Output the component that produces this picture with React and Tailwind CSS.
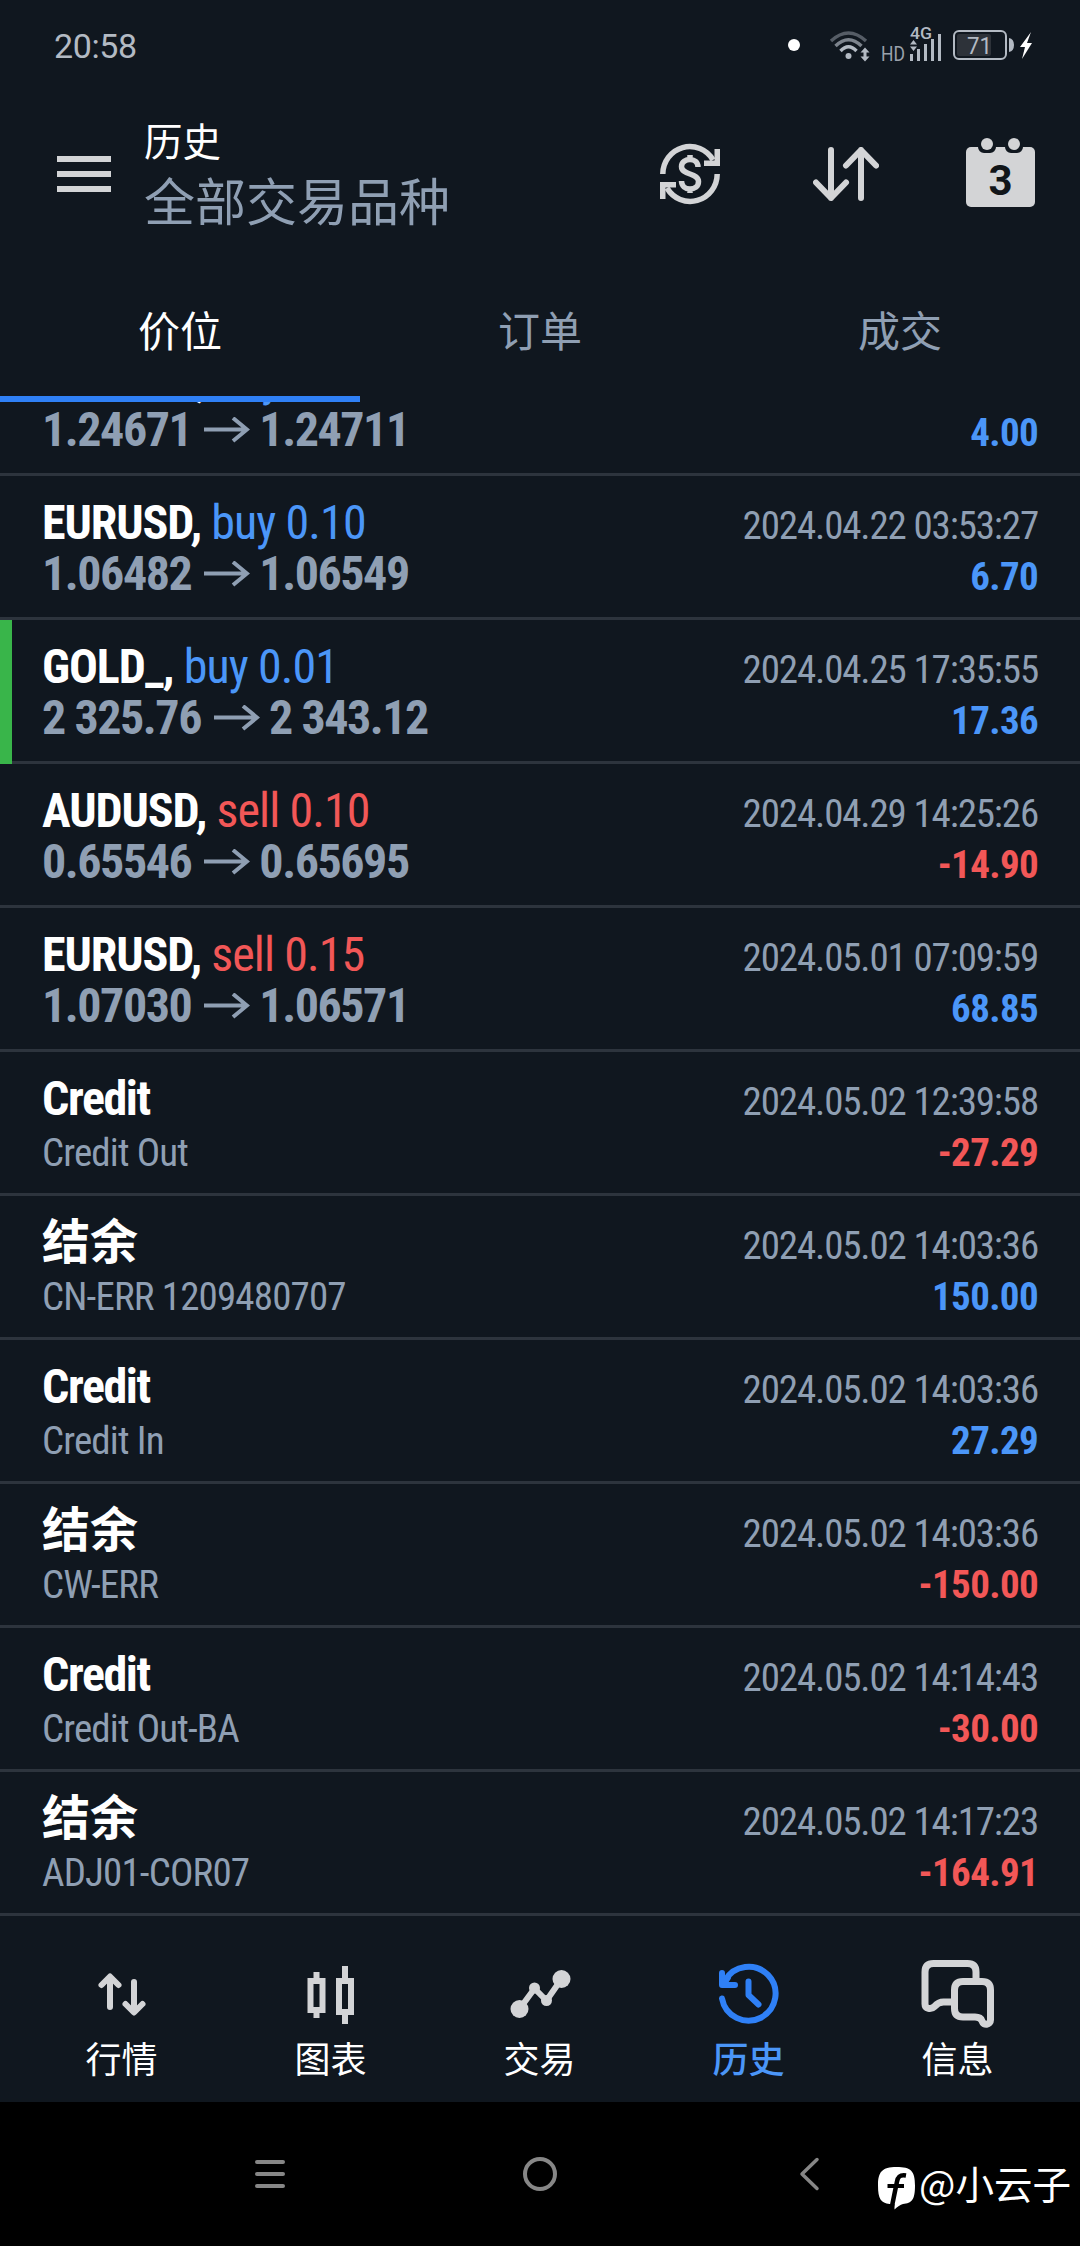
import React from 'react';

const rows = [
  { title: 'GBPUSD', side: 'buy', lot: '0.10', from: '1.24671', to: '1.24711', date: '2024.04.22 03:51:10', value: '4.00' },
  { title: 'EURUSD', side: 'buy', lot: '0.10', from: '1.06482', to: '1.06549', date: '2024.04.22 03:53:27', value: '6.70' },
  { title: 'GOLD_', side: 'buy', lot: '0.01', from: '2 325.76', to: '2 343.12', date: '2024.04.25 17:35:55', value: '17.36', marked: true },
  { title: 'AUDUSD', side: 'sell', lot: '0.10', from: '0.65546', to: '0.65695', date: '2024.04.29 14:25:26', value: '-14.90' },
  { title: 'EURUSD', side: 'sell', lot: '0.15', from: '1.07030', to: '1.06571', date: '2024.05.01 07:09:59', value: '68.85' },
  { title: 'Credit', comment: 'Credit Out', date: '2024.05.02 12:39:58', value: '-27.29' },
  { title: '结余', comment: 'CN-ERR 1209480707', date: '2024.05.02 14:03:36', value: '150.00' },
  { title: 'Credit', comment: 'Credit In', date: '2024.05.02 14:03:36', value: '27.29' },
  { title: '结余', comment: 'CW-ERR', date: '2024.05.02 14:03:36', value: '-150.00' },
  { title: 'Credit', comment: 'Credit Out-BA', date: '2024.05.02 14:14:43', value: '-30.00' },
  { title: '结余', comment: 'ADJ01-COR07', date: '2024.05.02 14:17:23', value: '-164.91' },
];

const StatusBar = () => (
  <div className="h-[92px] pl-[54px] pr-[46px] flex items-center justify-between text-[#b3bac3]">
    <span className="text-[34px] leading-[40px] tracking-[-0.4px]">20:58</span>
    <svg width="248" height="44" viewBox="786 24 248 44" fill="none">
      <circle cx="794" cy="45" r="6" fill="#fff" />
      <g strokeWidth="3.4">
        <path d="M831 41 Q848.500 25 866 41" stroke="#565d66" />
        <path d="M835.500 46 Q848.500 33.500 861.500 46" stroke="#7d848d" />
        <path d="M840.500 51 Q848.500 42.500 856.500 51" stroke="#b3bac3" />
      </g>
      <circle cx="848.500" cy="56" r="3" fill="#b3bac3" />
      <path d="M865 47.500 l4.500 5 h-3 v4 h3 l-4.500 5 l-4.500 -5 h3 v-4 h-3z" fill="#b3bac3" />
      <text x="881" y="61" fontSize="21" textLength="24" lengthAdjust="spacingAndGlyphs" fill="#9aa1ab">HD</text>
      <text x="910" y="39" fontSize="16.500" fontWeight="500" textLength="22" lengthAdjust="spacingAndGlyphs" fill="#b3bac3">4G</text>
      <path d="M911.500 61v-7M918.500 61v-12M925.500 61v-17M932.500 61v-22M939.500 61v-27" stroke="#b3bac3" strokeWidth="3" />
      <path d="M913.500 40l3.500 4.500h-7zM913.500 51l3.500-4.500h-7z" fill="#b3bac3" />
      <rect x="954" y="31" width="52" height="28" rx="5" stroke="#b3bac3" strokeWidth="2" />
      <rect x="957" y="34" width="34" height="22" rx="2" fill="#2d3239" />
      <text x="967" y="54" fontSize="24" textLength="25" lengthAdjust="spacingAndGlyphs" fill="#b3bac3">71</text>
      <path d="M1009 38 q5 1 5 7 t-5 7z" fill="#b3bac3" />
      <path d="M1031 32 L1020 47 h5 l-3 12 L1032 43 h-5z" fill="#fff" />
    </svg>
  </div>
);

const RefreshDollar = () => (
  <svg width="60" height="62" viewBox="0 0 60 62" fill="none" stroke="#d3d4d6" strokeWidth="5.500">
    <path d="M2.800 31 A27 27.500 0 0 1 53 17" />
    <path d="M57.200 31 A27 27.500 0 0 1 7 45" />
    <path d="M60 6v17H44v-5.500l10.500 0V6zM0 56V39H16v5.500H5.500V56z" fill="#d3d4d6" stroke="none" />
    <path d="M38 24c0-5-4-7.500-8-7.500s-8.500 2.500-8.500 7c0 9 17 6 17 15c0 5-4 7.500-8.500 7.500s-8.500-3-8.500-8M30 12v5M30 45v5" />
  </svg>
);

const SortArrows = () => (
  <svg width="66" height="54" viewBox="0 0 66 54" fill="none" stroke="#d3d4d6" strokeWidth="6" strokeLinecap="round" strokeLinejoin="round">
    <path d="M18 3v48M3 35.500l15 15.500l15-15.500" />
    <path d="M48 51V3M33 18.500L48 3l15 15.500" />
  </svg>
);

const Calendar = () => (
  <svg width="69" height="70" viewBox="0 0 69 70">
    <rect y="9" width="69" height="60" rx="5" fill="#d3d4d6" />
    <path d="M12 8v1a6 6 0 0 0 6 6h6a6 6 0 0 0 6-6v-1zM39 8v1a6 6 0 0 0 6 6h6a6 6 0 0 0 6-6v-1z" fill="#10171f" />
    <circle cx="21" cy="6" r="6" fill="#d3d4d6" />
    <circle cx="48" cy="6" r="6" fill="#d3d4d6" />
    <text x="34.500" y="57" fontSize="42" fontWeight="700" textAnchor="middle" fill="#111519">3</text>
  </svg>
);

const Header = () => (
  <header className="h-[172px] pl-[57px] pr-[45px] flex items-start">
    <div className="mt-[64px] w-[54px] flex flex-col gap-[9px]">
      <div className="h-[6px] bg-[#d3d4d6]" />
      <div className="h-[6px] bg-[#d3d4d6]" />
      <div className="h-[6px] bg-[#d3d4d6]" />
    </div>
    <div className="ml-[33px] mt-[25px] flex-1">
      <div className="text-[38.500px] leading-[52px] text-white">历史</div>
      <div className="mt-[2px] text-[51px] leading-[66px] text-[#8f9fb3]">全部交易品种</div>
    </div>
    <div className="mt-[46px] flex items-start">
      <div className="mt-[5px] mr-[93px]"><RefreshDollar /></div>
      <div className="mt-[9px] mr-[87px]"><SortArrows /></div>
      <Calendar />
    </div>
  </header>
);

const Tabs = () => (
  <div className="h-[138px] grid grid-cols-3 text-[42px] leading-[60px] text-center text-[#8f9fb3]">
    <div className="pt-[39px] text-white border-b-[6px] border-[#2f80f6]">价位</div>
    <div className="pt-[39px]">订单</div>
    <div className="pt-[39px]">成交</div>
  </div>
);

const PriceArrow = () => (
  <svg className="inline-block align-baseline ml-[13px] mr-[9px]" width="46" height="29" viewBox="0 0 46 29" fill="none" stroke="#8f9fb3" strokeWidth="4">
    <path d="M0 12.500h43M29 1l14 11.500l-14 11.500" />
  </svg>
);

const Row = ({ row }) => {
  const sideColor = row.side === 'buy' ? 'text-[#4b96f8]' : 'text-[#f25757]';
  const valueColor = row.value.startsWith('-') ? 'text-[#f25757]' : 'text-[#4b96f8]';
  // latin titles are set tighter than the Chinese ones
  let titleTracking = 'tracking-[-1.1px]';
  if (row.title === '结余') titleTracking = 'tracking-normal';
  if (row.title === 'Credit') titleTracking = 'tracking-[-1.45px]';

  return (
    <div className="h-[144px] shrink-0 flex border-b-[3px] border-[#2d343d]">
      <div className={row.marked ? 'w-[12px] -mb-[3px] bg-[#39b54a]' : 'w-[12px]'} />
      <div className="flex-1 pt-[21px] pl-[30px] pr-[42px] font-['Roboto_Condensed','Roboto','Noto_Sans_CJK_SC',sans-serif] [font-stretch:75%]">
        <div className="h-[51px] flex items-baseline justify-between leading-[51px] whitespace-pre">
          <div className="text-[48px]">
            <span className={`font-bold text-white ${titleTracking}`}>{row.title}{row.side && ','}</span>
            {row.side && <span className={`tracking-[-0.9px] ${sideColor}`}> {row.side} {row.lot}</span>}
          </div>
          <div className="text-[39px] tracking-[-1.15px] text-[#8f9fb3]">{row.date}</div>
        </div>
        <div className="h-[51px] flex items-baseline justify-between whitespace-pre text-[#8f9fb3]">
          {row.side ? (
            <div className="text-[48px] leading-[51px] tracking-[-1.45px] font-bold">{row.from}<PriceArrow />{row.to}</div>
          ) : (
            <div className="text-[39px] leading-[59px] tracking-[-0.85px]">{row.comment}</div>
          )}
          <div className={`text-[39px] leading-[51px] tracking-[-0.65px] font-bold ${valueColor}`}>{row.value}</div>
        </div>
      </div>
    </div>
  );
};

const icons = {
  quotes: (
    <g fill="none" stroke="#d3d4d6" strokeWidth="6" strokeLinecap="round" strokeLinejoin="round">
      <path d="M28 47V17M19.500 25l8.500-8.500l8.500 8.500M52 22v30M43.500 44l8.500 8.500l8.500-8.500" />
    </g>
  ),
  charts: (
    <g fill="none" stroke="#d3d4d6" strokeWidth="6">
      <path d="M19.500 21h12v29H19.500zM48 21h12v31H48zM25.500 12v6M25.500 53v5M54 6v12M54 55v9" />
    </g>
  ),
  trade: (
    <g fill="#d3d4d6" stroke="#d3d4d6" strokeWidth="6">
      <path d="M19.500 49L34.500 28.500L46.500 40.500L61.500 19" fill="none" />
      <circle cx="19.500" cy="49" r="9" stroke="none" />
      <circle cx="34.500" cy="28" r="5.500" stroke="none" />
      <circle cx="46.500" cy="40.500" r="5.500" stroke="none" />
      <circle cx="61.500" cy="19" r="9" stroke="none" />
    </g>
  ),
  history: (
    <g fill="none" stroke="#2f80f6" strokeWidth="6" strokeLinecap="round" strokeLinejoin="round">
      <path d="M13 38.500A27 27 0 1 0 16 20.500M13 13v12h13M15 23.500l4-6M39.500 21.500v13.500l10 9.500" />
    </g>
  ),
  messages: (
    <g fill="none" stroke="#d3d4d6" strokeWidth="7" strokeLinecap="butt" strokeLinejoin="round">
      <path d="M58 20v-8q0-8.500-8.500-8.500H15.500Q7 3.500 7 12v32c0 5 6 6 9.500 2.500c3-3.500 5-4.500 9-4.500H35" />
      <path d="M45 21.500h19q8.500 0 8.500 8.500V60c0 5-7 6-8.500 1c-1-3-3-4-7-4H45q-8.500 0-8.500-8.500V30q0-8.500 8.500-8.500z" />
    </g>
  ),
};

const navItems = [
  { id: 'quotes', label: '行情' },
  { id: 'charts', label: '图表' },
  { id: 'trade', label: '交易' },
  { id: 'history', label: '历史', active: true },
  { id: 'messages', label: '信息' },
];

const BottomNav = () => (
  <nav className="h-[186px] pl-[17px] pr-[18px] pt-[44px] grid grid-cols-5">
    {navItems.map((item) => (
      <div key={item.id} className="flex flex-col items-center">
        <svg width="80" height="70" viewBox="0 0 80 70">{icons[item.id]}</svg>
        <span className={item.active ? 'mt-[6px] text-[36px] leading-[50px] font-medium text-[#4b96f8]' : 'mt-[6px] text-[36px] leading-[50px] text-white'}>
          {item.label}
        </span>
      </div>
    ))}
  </nav>
);

const SystemBar = () => (
  <div className="relative h-[144px] bg-black">
    <div className="h-full px-[135px] grid grid-cols-3 items-center justify-items-center">
      <svg width="34" height="34" viewBox="0 0 34 34" fill="none" stroke="#878787" strokeWidth="4" strokeLinecap="round">
        <path d="M4 5h26M4 17h26M4 29h26" />
      </svg>
      <svg width="36" height="36" viewBox="0 0 36 36" fill="none" stroke="#878787" strokeWidth="4">
        <circle cx="18" cy="18" r="15" />
      </svg>
      <svg width="34" height="36" viewBox="0 0 34 36" fill="none" stroke="#878787" strokeWidth="3.500" strokeLinecap="round" strokeLinejoin="round">
        <path d="M24 3.500L9 18l15 14.500" />
      </svg>
    </div>
    <div className="absolute right-[9px] top-[51px] flex items-center text-white text-[38.500px] leading-[50px]">
      <svg className="mt-[14px] mr-[3px]" width="38" height="44" viewBox="0 0 38 44">
        <path d="M18.500 0C33 0 37 4 37 18.500S34 36 25 37q-4 1-8.500 5.500V37h-5C3 36 0 32 0 18.500S4 0 18.500 0z" fill="#fff" />
        <path d="M28 8.500c-6-1-8 1-9 6L14 39" fill="none" stroke="#000" strokeWidth="4.500" />
        <path d="M9.500 19H26" stroke="#000" strokeWidth="4" />
      </svg>
      <span className="font-['Noto_Sans_CJK_SC',sans-serif]">@小云子</span>
    </div>
  </div>
);

export default function App() {
  return (
    <div className="w-[1080px] h-[2246px] flex flex-col overflow-hidden bg-[#10171f] font-['Roboto','Noto_Sans_CJK_SC',sans-serif]">
      <StatusBar />
      <Header />
      <Tabs />
      <div className="h-[1514px] flex flex-col justify-end overflow-hidden">
        {rows.map((row, i) => (
          <Row key={i} row={row} />
        ))}
      </div>
      <BottomNav />
      <SystemBar />
    </div>
  );
}
